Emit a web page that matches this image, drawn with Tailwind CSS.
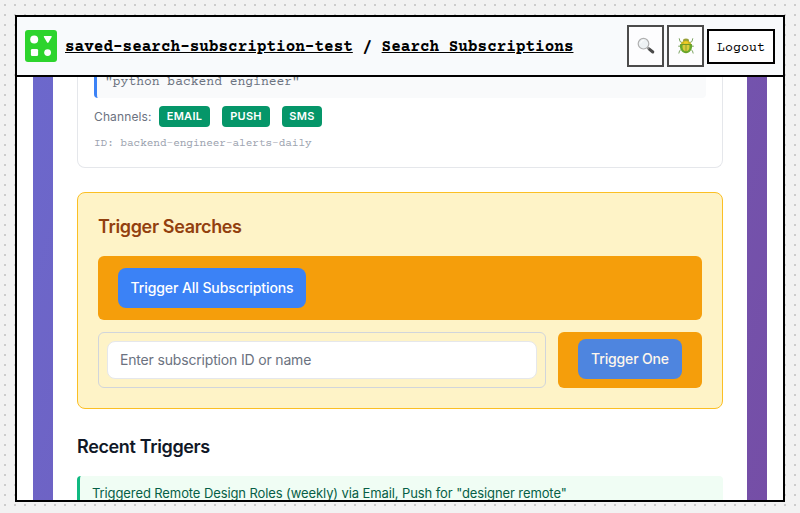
<!DOCTYPE html>
<html lang="en">
<head>
<meta charset="utf-8">
<title>Search Subscriptions</title>
<script src="https://cdn.jsdelivr.net/npm/@tailwindcss/browser@4"></script>
</head>
<body class="h-[513px] overflow-hidden bg-[#f2f2f2] bg-[linear-gradient(90deg,#f2f2f2_8px,transparent_8px),linear-gradient(#f2f2f2_8px,#ccc_8px)] bg-[length:10px_10px] bg-[position:-4px_-4px] font-['Inter',sans-serif]">
<div class="flex h-full flex-col px-[15px] pt-[15px] pb-[11px]">
<div class="flex min-h-0 flex-1 flex-col overflow-hidden border-2 border-black bg-white">
  <header class="flex h-[60px] shrink-0 items-center border-b-2 border-black bg-[#f8fafc] px-2">
    <svg class="size-8 shrink-0" viewBox="0 0 32 32"><rect width="32" height="32" rx="3" fill="#2dd42d"/><circle cx="9.2" cy="9.5" r="4" fill="#fff"/><path d="M19.6 6.7h6.4L22.8 12Z" fill="#fff" stroke="#fff" stroke-width="1.6" stroke-linejoin="round"/><rect x="5.9" y="19" width="7.2" height="7" rx="1.3" fill="#fff"/><circle cx="22.6" cy="22.6" r="3.4" fill="#fff"/></svg>
    <div class="ml-2 flex-1 pt-0.5 font-['Courier_Prime','Liberation_Mono',monospace] text-[16px] leading-6 font-bold whitespace-pre text-black"><span class="underline">saved-search-subscription-test</span> / <span class="underline">Search Subscriptions</span></div>
    <div class="flex items-center gap-[3px]">
      <button class="flex h-[42px] w-[37px] items-center justify-center border-2 border-[#4b4b4b] bg-[#fdfdfe]">
        <svg width="18" height="18" viewBox="0 0 18 18" fill="none"><path d="m12 11.800 3.800 3.200" stroke="#4a4a4a" stroke-width="3" stroke-linecap="round"/><path d="m10.200 10.400 1.800 1.600" stroke="#888" stroke-width="1.500"/><circle cx="6.500" cy="6.700" r="5.300" fill="#eef2f4" stroke="#b0b0b0" stroke-width="1.200"/><path d="M3.700 6.400a3 3 0 0 1 3-3" stroke="#fff"/></svg>
      </button>
      <button class="flex h-[42px] w-[37px] items-center justify-center border-2 border-[#4b4b4b] bg-[#fdfdfe]">
        <svg width="18" height="18" viewBox="0 0 18 18" fill="none"><path d="M5 5.500 3 4.500 2.200 1.300M13 5.500l2-1 .8-3.200M3.500 9.200H1.200M14.500 9.200h2.300M4.200 12.300 2.500 14l-.7 2.500M13.800 12.300l1.700 1.700.7 2.500" stroke="#7fa565" stroke-width="1"/><ellipse cx="9" cy="3.700" rx="3" ry="2.200" fill="#98a038"/><path d="M3.800 7Q5 3.700 9 3.700T14.200 7L13.400 8H4.600Z" fill="#c8b822"/><path d="M6.500 6.700Q7 4.300 9 4.300t2.500 2.400Z" fill="#f3cc25"/><path d="M3 7.300h12c.8 5-2.200 8.900-6 8.900S2.200 12.300 3 7.300Z" fill="#68a82b"/><path d="M5.700 7.900h6.600c.8 3.600-.9 6.300-3.300 6.300s-4.100-2.700-3.300-6.300Z" fill="#d9cc3b"/><path d="M9 8v8M3.200 7.500h11.600" stroke="#6d8e24" stroke-width=".7"/></svg>
      </button>
      <button class="flex h-[35px] w-[68px] items-center justify-center border-2 border-black bg-white pt-[5px] font-['Courier_Prime','Liberation_Mono',monospace] text-[13.333px] text-black">Logout</button>
    </div>
  </header>
  <main class="min-h-0 flex-1 overflow-hidden px-4">
    <div class="h-full bg-[linear-gradient(110deg,#6c68cc,#754ea6)] px-5">
      <div class="flex h-full flex-col bg-white px-6">
        <section class="flex h-[91px] shrink-0 flex-col items-stretch rounded-b-lg border border-t-0 border-[#e5e7eb] px-4">
          <div class="h-[21px] shrink-0 overflow-hidden rounded-b border-l-[3px] border-[#3b82f6] bg-[#f9fafb] pl-2 font-['Courier_Prime','Liberation_Mono',monospace] text-[13px] leading-[11px] text-[#6b7280]">"python backend engineer"</div>
          <div class="mt-2 flex h-[21px] shrink-0 items-center text-[#6b7280]">
            <span class="w-[65px] text-[12px] tracking-[0.13px]">Channels:</span>
            <div class="flex gap-3 text-[11px] font-semibold tracking-[0.3px] text-white">
              <span class="flex h-[21px] w-[51px] items-center justify-center rounded bg-[#059669]">EMAIL</span>
              <span class="flex h-[21px] w-12 items-center justify-center rounded bg-[#059669]">PUSH</span>
              <span class="flex h-[21px] w-10 items-center justify-center rounded bg-[#059669]">SMS</span>
            </div>
          </div>
          <div class="mt-2 pt-px font-['Courier_Prime','Liberation_Mono',monospace] text-[11px] leading-4 text-[#9ca3af]">ID: backend-engineer-alerts-daily</div>
        </section>
        <section class="mt-6 h-[217px] shrink-0 rounded-lg border border-[#fbbf24] bg-[#fef3c7] px-5 pt-5">
          <h2 class="text-[18px] leading-[27px] font-semibold tracking-[-0.36px] text-[#92400e]">Trigger Searches</h2>
          <div class="mt-4 flex h-16 items-center rounded-md bg-[#f59e0b] px-5">
            <button class="h-10 w-[188px] rounded-lg bg-[#3b82f6] pb-0.5 text-[14px] font-medium tracking-[-0.08px] text-white">Trigger All Subscriptions</button>
          </div>
          <div class="mt-3 flex h-14 gap-3">
            <div class="flex-1 rounded-md border border-[#d1d5db] p-2">
              <input class="block h-[38px] w-full rounded-lg border border-[#e5e7eb] bg-white px-3 pb-0.5 text-[14px] tracking-[-0.17px] placeholder:text-[#6b7280]" placeholder="Enter subscription ID or name">
            </div>
            <div class="w-36 rounded-md bg-[#f59e0b] px-5 pt-[7px]">
              <button class="block h-10 w-[104px] rounded-lg bg-[#4e85df] pb-0.5 text-[14px] font-medium tracking-[-0.15px] text-[#fdf6ec]">Trigger One</button>
            </div>
          </div>
        </section>
        <h2 class="mt-6 shrink-0 text-[18px] leading-[27px] font-semibold tracking-[-0.36px] text-[#111827]">Recent Triggers</h2>
        <div class="mt-4 h-12 shrink-0 rounded border-l-[3px] border-[#10b981] bg-[#f0fdf4] px-3 pt-[7px] text-[13px] leading-5 tracking-[-0.1px] text-[#065f46]">Triggered Remote Design Roles (weekly) via Email, Push for "designer remote"</div>
      </div>
    </div>
  </main>
</div>
</div>
</body>
</html>
